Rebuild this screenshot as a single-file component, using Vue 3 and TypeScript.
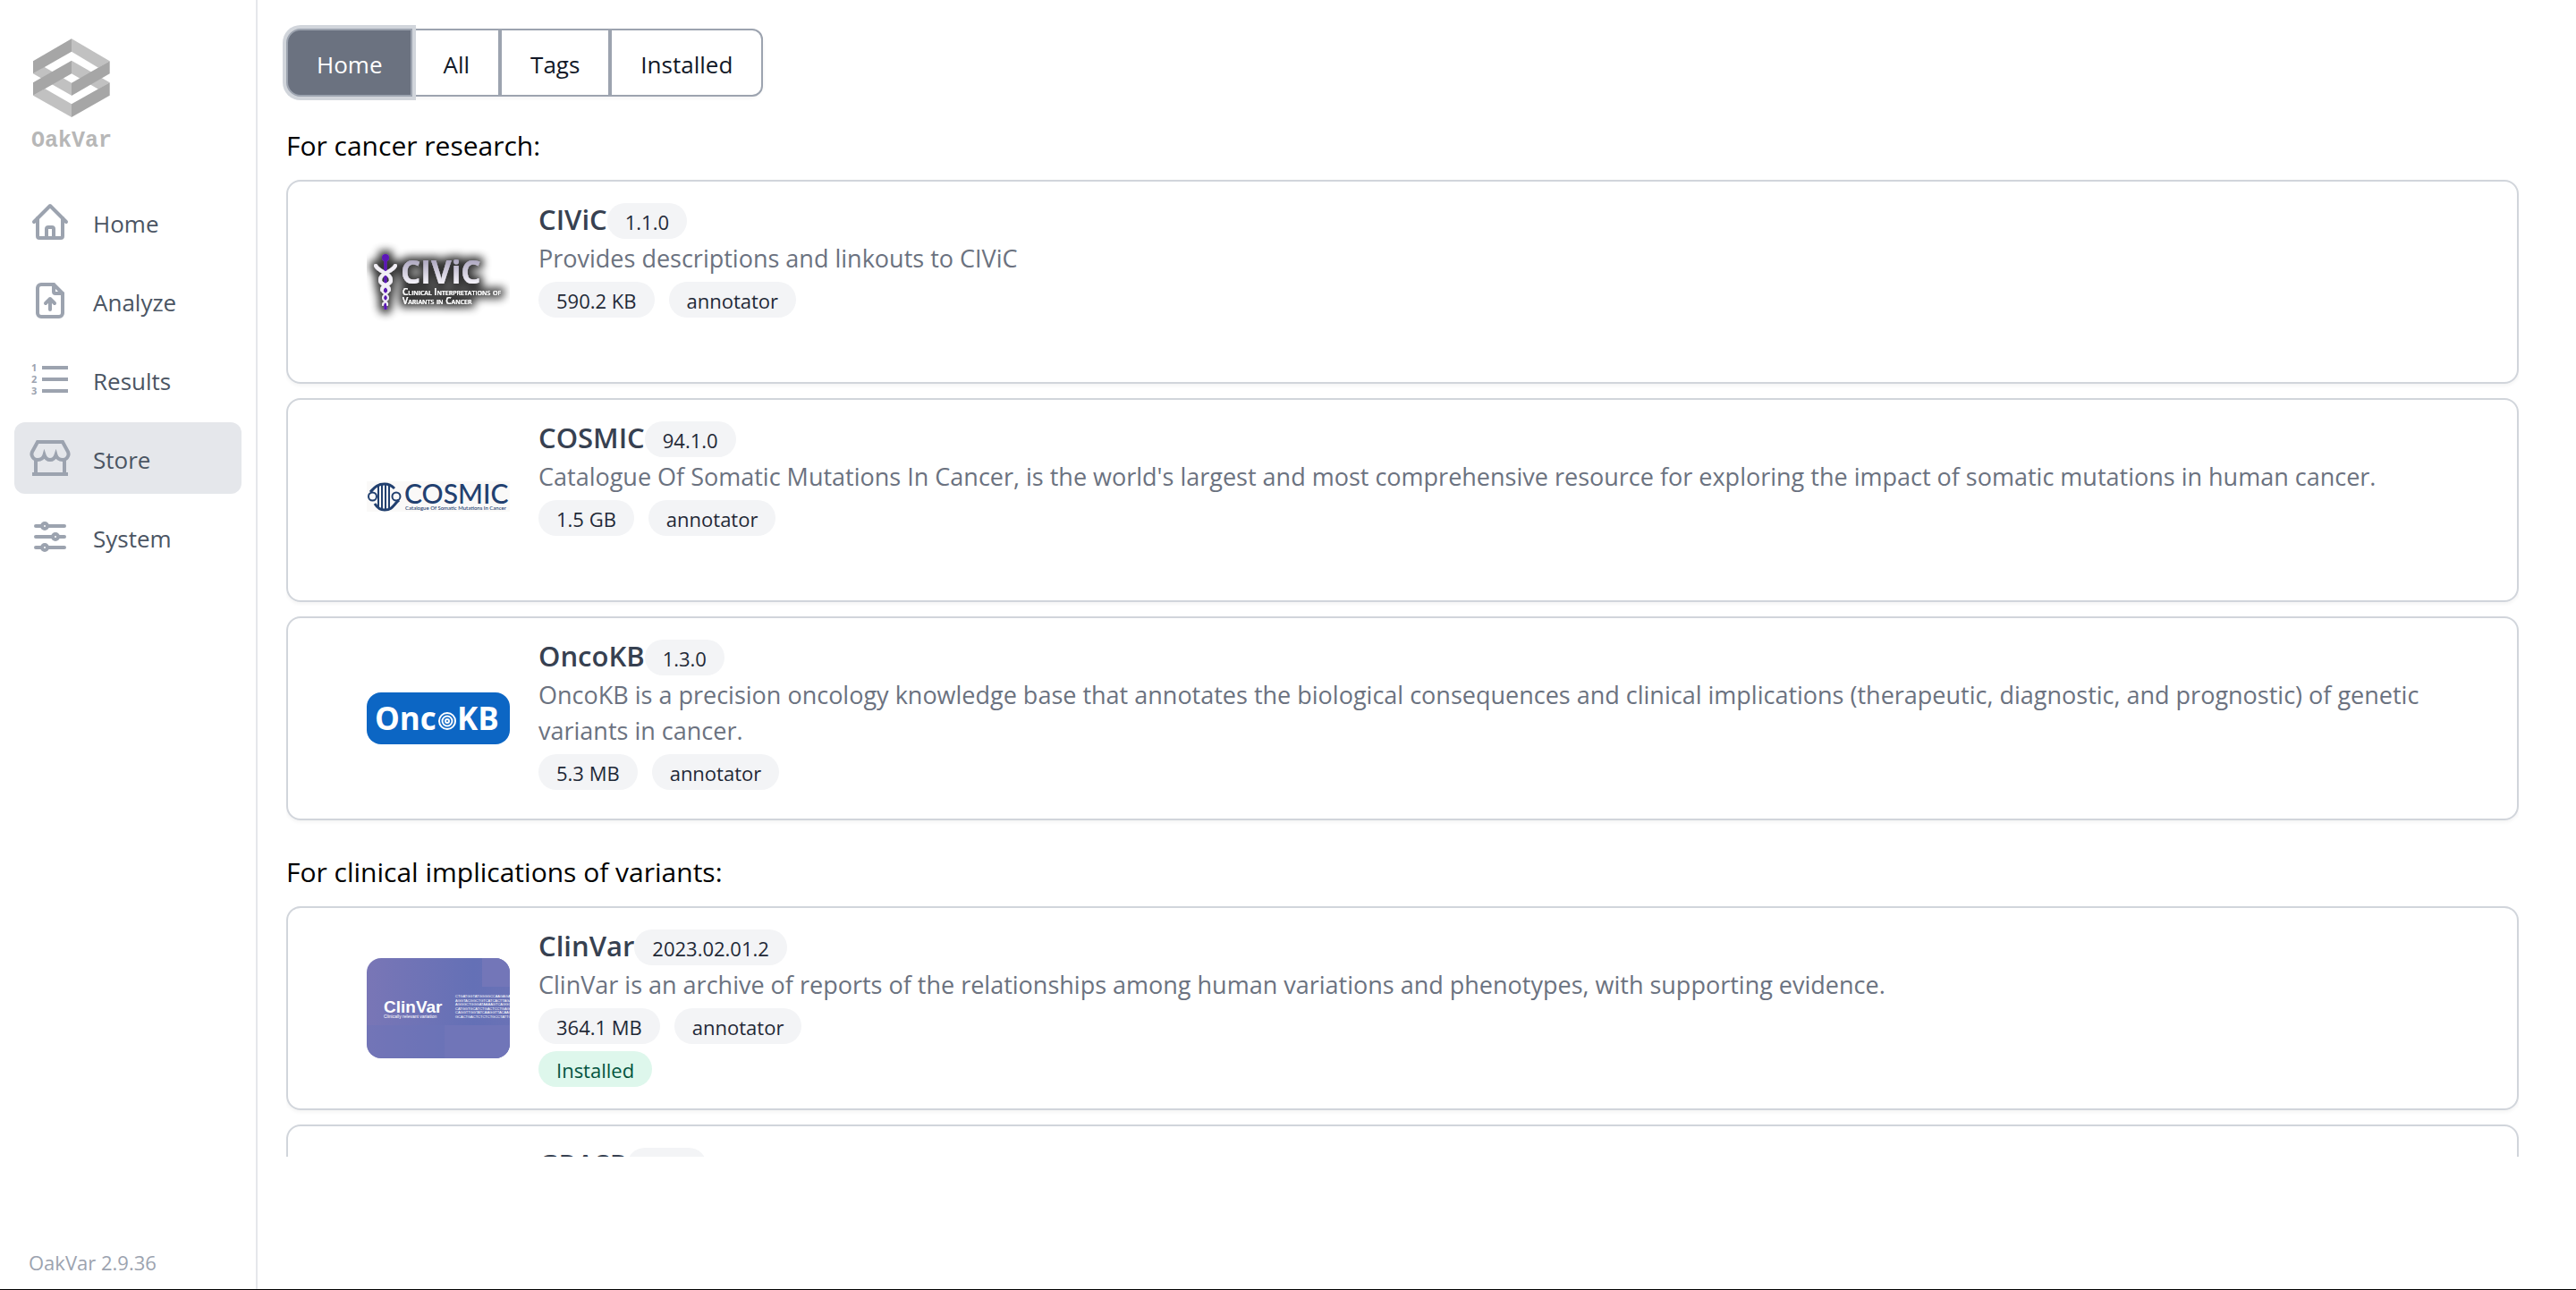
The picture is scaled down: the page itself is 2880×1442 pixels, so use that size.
<script setup lang="ts">
import { ref } from 'vue'

interface StoreModule {
  name: string
  title: string
  version: string
  description: string
  size: string
  type: string
  installed: boolean
}

interface Section {
  heading: string
  modules: StoreModule[]
}

const navItems = ['Home', 'Analyze', 'Results', 'Store', 'System']
const currentPage = 'Store'

const tabs = ['Home', 'All', 'Tags', 'Installed']
const activeTab = ref('Home')

const sections: Section[] = [
  {
    heading: 'For cancer research:',
    modules: [
      {
        name: 'civic',
        title: 'CIViC',
        version: '1.1.0',
        description: 'Provides descriptions and linkouts to CIViC',
        size: '590.2 KB',
        type: 'annotator',
        installed: false,
      },
      {
        name: 'cosmic',
        title: 'COSMIC',
        version: '94.1.0',
        description:
          "Catalogue Of Somatic Mutations In Cancer, is the world's largest and most comprehensive resource for exploring the impact of somatic mutations in human cancer.",
        size: '1.5 GB',
        type: 'annotator',
        installed: false,
      },
      {
        name: 'oncokb',
        title: 'OncoKB',
        version: '1.3.0',
        description:
          'OncoKB is a precision oncology knowledge base that annotates the biological consequences and clinical implications (therapeutic, diagnostic, and prognostic) of genetic variants in cancer.',
        size: '5.3 MB',
        type: 'annotator',
        installed: false,
      },
    ],
  },
  {
    heading: 'For clinical implications of variants:',
    modules: [
      {
        name: 'clinvar',
        title: 'ClinVar',
        version: '2023.02.01.2',
        description:
          'ClinVar is an archive of reports of the relationships among human variations and phenotypes, with supporting evidence.',
        size: '364.1 MB',
        type: 'annotator',
        installed: true,
      },
      {
        name: 'grasp',
        title: 'GRASP',
        version: '1.1.0',
        description: '',
        size: '',
        type: '',
        installed: false,
      },
    ],
  },
]

const sequences = [
  'CTGATGGTATGGGGCCAAGAGATA',
  'AGGTACGGCTGTCATCACTTAGAC',
  'AGGGCTGGGATAAAAGTCAGGGCA',
  'CATGGTGCATCTGACTCCTGAGGA',
  'CAGGTTGGTATCAAGGTTACAAGA',
  'GCACTGACTCTCTCTGCCTATTGG',
]
</script>

<template>
  <div class="page">
    <aside class="sidebar">
      <a class="brand" href="#" aria-label="OakVar home">
        <svg class="brand-mark" viewBox="108 125 264 268" aria-hidden="true">
          <g fill="#c1c1c1">
            <path d="M240 128 368 203 330 225 240 171Z" />
            <path d="M111 245 148 222 240 276V318Z" />
            <path d="M240 201 368 275 330 297 240 245Z" />
            <path d="M111 318 150 295 240 347V391Z" />
          </g>
          <g fill="#a6a6a6">
            <path d="M111 203 240 128V171L111 245Z" />
            <path d="M111 275 240 201V245L111 318Z" />
            <path d="M368 203V245L240 319V276Z" />
            <path d="M368 275V318L240 391V347Z" />
          </g>
        </svg>
        <span class="brand-name">OakVar</span>
      </a>

      <nav class="nav">
        <a
          v-for="item in navItems"
          :key="item"
          href="#"
          class="nav-item"
          :class="{ current: item === currentPage }"
        >
          <svg class="nav-icon" viewBox="0 0 48 48" aria-hidden="true">
            <g v-if="item === 'Home'" stroke-linecap="round" stroke-linejoin="round">
              <path d="M6 24 24 6 42 24" />
              <path d="M10 20V40a2 2 0 0 0 2 2H36a2 2 0 0 0 2-2V20" />
              <path d="M20 42V32a2 2 0 0 1 2-2H26a2 2 0 0 1 2 2V42" />
            </g>
            <g v-else-if="item === 'Analyze'" stroke-linecap="round" stroke-linejoin="round">
              <path d="M28 6H14a4 4 0 0 0-4 4V38a4 4 0 0 0 4 4H34a4 4 0 0 0 4-4V16Z" />
              <path d="M28 6V14a2 2 0 0 0 2 2H38" />
              <path d="M24 34V22M19 27 24 22 29 27" />
            </g>
            <g v-else-if="item === 'Results'">
              <path d="M15 11H44M15 24H44M15 37H44" />
              <g class="digits">
                <text x="3" y="15">1</text>
                <text x="3" y="28">2</text>
                <text x="3" y="41">3</text>
              </g>
            </g>
            <g v-else-if="item === 'Store'">
              <path
                d="M10 6H38L44 17C46 22 42 26 38 26 34 26 31.500 24 30.500 20.500 29 25 26.500 26 24 26 21.500 26 19 25 17.500 20.500 16.500 24 14 26 10 26 6 26 2 22 4 17Z"
              />
              <path d="M8 25V42M40 25V42M4 42H44" />
            </g>
            <g v-else stroke-linecap="round">
              <path d="M8 12H14M22 12H40M8 24H26M34 24H40M8 36H14M22 36H40" />
              <circle cx="18" cy="12" r="3" />
              <circle cx="30" cy="24" r="3" />
              <circle cx="18" cy="36" r="3" />
            </g>
          </svg>
          <span class="nav-label">{{ item }}</span>
        </a>
      </nav>

      <p class="release">OakVar 2.9.36</p>
    </aside>

    <main class="main">
      <div class="tabs" role="group" aria-label="Store views">
        <button
          v-for="tab in tabs"
          :key="tab"
          type="button"
          class="tab"
          :class="{ active: tab === activeTab }"
          @click="activeTab = tab"
        >
          {{ tab }}
        </button>
      </div>

      <div class="listing">
        <section v-for="section in sections" :key="section.heading" class="section">
          <h2 class="section-title">{{ section.heading }}</h2>
          <div class="cards">
            <article v-for="mod in section.modules" :key="mod.name" class="card">
              <div class="logo">
                <svg v-if="mod.name === 'civic'" class="civic" width="160" height="96" viewBox="0 0 160 96" aria-hidden="true">
                  <defs>
                    <linearGradient id="civic-fill" x1="0" y1="0" x2="0" y2="1">
                      <stop offset="0.2" stop-color="#a9a3bd" />
                      <stop offset="0.8" stop-color="#f6f4fa" />
                    </linearGradient>
                    <filter id="civic-glow" filterUnits="userSpaceOnUse" x="0" y="0" width="160" height="96">
                      <feMorphology in="SourceAlpha" operator="dilate" radius="4" result="wide" />
                      <feGaussianBlur in="wide" stdDeviation="5" result="soft" />
                      <feComponentTransfer in="soft" result="shade">
                        <feFuncA type="linear" slope="0.8" />
                      </feComponentTransfer>
                      <feMerge>
                        <feMergeNode in="shade" />
                        <feMergeNode in="SourceGraphic" />
                      </feMerge>
                    </filter>
                  </defs>
                  <g filter="url(#civic-glow)">
                    <path d="M21 21V79" stroke="#5b17b8" stroke-width="3" />
                    <circle cx="21" cy="21" r="4" fill="#5b17b8" />
                    <g fill="none" stroke="#f2eff6" stroke-linecap="round">
                      <path d="M10 30C14 38 28 38 27 47 26 52 17 51 17 57" stroke-width="4" />
                      <path d="M32 30C28 38 14 38 15 47 16 52 25 51 25 57" stroke-width="4" />
                      <path d="M17 57C17 62 24 61 24 66 24 70 18 70 18 74M25 57C25 62 18 61 18 66 18 70 24 70 23 74" stroke-width="2" />
                    </g>
                    <text class="civic-name" x="38" y="50">CIViC</text>
                    <g class="civic-sub">
                      <text x="40" y="63">Clinical Interpretations of</text>
                      <text x="40" y="73">Variants in Cancer</text>
                    </g>
                  </g>
                </svg>

                <svg v-else-if="mod.name === 'cosmic'" width="160" height="42" viewBox="0 0 160 42" aria-hidden="true">
                  <rect width="160" height="34" fill="#faf9f8" />
                  <g fill="none" stroke="#22406f" stroke-width="2">
                    <circle cx="6.500" cy="17" r="4.500" />
                    <circle cx="33" cy="17" r="4.500" />
                    <path d="M4 12C8 8 11 3 20 3 25 3 28 5 31 8M9 25C12 30 15 32 20 32 29 32 30 26 36 21" stroke-width="3" />
                    <path d="M13 5V30M17 4V31M21 4V31M25 5V30" />
                  </g>
                  <text class="cosmic-name" x="42" y="25">COSMIC</text>
                  <text class="cosmic-sub" x="43" y="32">Catalogue Of Somatic Mutations In Cancer</text>
                </svg>

                <svg v-else-if="mod.name === 'oncokb'" width="160" height="58" viewBox="0 0 160 58" aria-hidden="true">
                  <rect width="160" height="58" rx="16" fill="#0c66c4" />
                  <g class="oncokb-name">
                    <text x="9" y="42">Onc</text>
                    <text x="101" y="42">KB</text>
                  </g>
                  <g fill="none" stroke="#fff" stroke-width="2">
                    <circle cx="90" cy="32" r="9" />
                    <circle cx="90" cy="32" r="5.500" />
                    <circle cx="90" cy="32" r="2" />
                  </g>
                </svg>

                <svg v-else-if="mod.name === 'clinvar'" class="clinvar" width="160" height="112" viewBox="0 0 160 112" aria-hidden="true">
                  <defs>
                    <linearGradient id="clinvar-bg" x1="0" y1="0" x2="1" y2="0">
                      <stop offset="0" stop-color="#7976b6" />
                      <stop offset="0.75" stop-color="#6470b6" />
                      <stop offset="1" stop-color="#6a72b6" />
                    </linearGradient>
                  </defs>
                  <rect width="160" height="112" fill="url(#clinvar-bg)" />
                  <path d="M129 0H160V32H129Z" fill="#7376b8" />
                  <path d="M0 75H87V112H0Z" fill="#6b73b8" opacity="0.5" />
                  <path d="M87 75H160V112H87Z" fill="#7075b8" />
                  <g fill="#fff">
                    <text class="clinvar-name" x="19" y="61">ClinVar</text>
                    <text class="clinvar-sub" x="19" y="67">Clinically relevant variation</text>
                    <text
                      v-for="(row, i) in sequences"
                      :key="row"
                      class="clinvar-seq"
                      x="99"
                      :y="44 + i * 4.6"
                    >{{ row }}</text>
                  </g>
                </svg>
              </div>

              <div class="info">
                <div class="title-row">
                  <h3 class="title">{{ mod.title }}</h3>
                  <span class="badge">{{ mod.version }}</span>
                </div>
                <p class="description">{{ mod.description }}</p>
                <div v-if="mod.size" class="badges">
                  <span class="badge">{{ mod.size }}</span>
                  <span class="badge">{{ mod.type }}</span>
                </div>
                <div v-if="mod.installed" class="status">
                  <span class="badge green">Installed</span>
                </div>
              </div>
            </article>
          </div>
        </section>
      </div>
    </main>
  </div>
</template>

<style>
body {
  margin: 0;
  background: #fff;
}
</style>

<style scoped>
.page {
  display: flex;
  box-sizing: border-box;
  height: 100vh;
  border-bottom: 1px solid #000;
  font-family: 'Open Sans', 'Noto Sans', sans-serif;
  font-size: 27px;
  line-height: 40px;
  color: #000;
}

.sidebar {
  display: flex;
  flex: none;
  flex-direction: column;
  box-sizing: border-box;
  width: 288px;
  padding: 42px 16px 10px;
  border-right: 2px solid #e5e7eb;
}

.brand {
  display: flex;
  flex-direction: column;
  align-self: flex-start;
  align-items: center;
  margin-left: 19px;
  margin-bottom: 34px;
  text-decoration: none;
}

.brand-mark {
  width: 88px;
  height: 90px;
}

.brand-name {
  margin-top: 10px;
  font-family: 'Liberation Mono', monospace;
  font-size: 25px;
  font-weight: 700;
  line-height: 32px;
  color: #b7b7b7;
}

.nav {
  display: flex;
  flex: 1;
  flex-direction: column;
  gap: 8px;
}

.nav-item {
  display: flex;
  align-items: center;
  gap: 24px;
  height: 80px;
  padding: 0 16px;
  border-radius: 12px;
  font-size: 26px;
  color: #4b5563;
  text-decoration: none;
}

.nav-item.current {
  background: #e5e7eb;
}

.nav-icon {
  width: 48px;
  height: 48px;
  fill: none;
  stroke: #9ca3af;
  stroke-width: 4;
}

.nav-label {
  padding-top: 4px;
}

.digits {
  fill: #9ca3af;
  stroke: none;
  font-size: 11px;
  font-weight: 700;
}

.release {
  margin: 0 16px;
  font-size: 22px;
  color: #9ca3af;
}

.main {
  display: flex;
  flex: 1;
  flex-direction: column;
  min-width: 0;
  padding: 32px 64px 148px 32px;
}

.tabs {
  display: flex;
  flex: none;
  align-self: flex-start;
  border-radius: 16px;
  box-shadow: 0 2px 4px rgba(0, 0, 0, 0.05);
}

.tab {
  height: 76px;
  padding: 4px 32px 0;
  border: 2px solid #9ca3af;
  background: #fff;
  font: inherit;
  font-size: 26px;
  color: #111827;
  cursor: pointer;
}

.tab:first-child {
  border-radius: 16px 0 0 16px;
}

.tab:last-child {
  border-radius: 0 12px 12px 0;
}

.tab.active {
  z-index: 1;
  background: #6b7280;
  box-shadow: 0 0 0 4px #d1d5db;
  color: #fff;
}

.listing {
  display: flex;
  flex: 1;
  flex-direction: column;
  gap: 36px;
  min-height: 0;
  margin-top: 33px;
  overflow-y: auto;
  scrollbar-width: none;
}

.section-title {
  margin: 0 0 16px;
  font-size: 30px;
  font-weight: 400;
  line-height: 44px;
}

.cards {
  display: flex;
  flex-direction: column;
  gap: 16px;
}

.card {
  display: flex;
  gap: 32px;
  box-sizing: border-box;
  min-height: 228px;
  padding: 0 48px 0 88px;
  border: 2px solid #d1d5db;
  border-radius: 16px;
  box-shadow: 0 2px 4px rgba(0, 0, 0, 0.05);
}

.logo {
  display: flex;
  flex: none;
  align-items: center;
  width: 160px;
}

.info {
  flex: 1;
  min-width: 0;
  padding: 24px 0;
}

.title-row,
.badges,
.status {
  display: flex;
}

.title {
  margin: 0;
  font-size: 31px;
  font-weight: 600;
  line-height: 36px;
  color: #374151;
}

.description {
  margin: 2px 0 6px;
  color: #6b7280;
}

.badges {
  gap: 16px;
}

.status {
  margin-top: 8px;
}

.badge {
  padding: 2px 20px 0;
  border-radius: 20px;
  background: #f3f4f6;
  font-size: 22px;
  line-height: 38px;
  color: #1f2937;
}

.badge.green {
  background: #def7ec;
  color: #03543f;
}

.civic-name {
  fill: url(#civic-fill);
  font-size: 35px;
  font-weight: 700;
}

.civic-sub {
  fill: #fff;
  font-size: 10px;
  font-variant: small-caps;
  font-weight: 600;
}

.cosmic-name {
  fill: #22406f;
  font-family: Lato, sans-serif;
  font-size: 30px;
  font-weight: 500;
}

.cosmic-sub {
  fill: #22406f;
  font-family: Lato, sans-serif;
  font-size: 6px;
  font-weight: 500;
}

.oncokb-name {
  fill: #fff;
  font-size: 35px;
  font-weight: 700;
}

.clinvar {
  border-radius: 16px;
}

.clinvar-name,
.clinvar-sub,
.clinvar-seq {
  font-family: 'Liberation Sans', sans-serif;
}

.clinvar-name {
  font-size: 19px;
  font-weight: 700;
}

.clinvar-sub {
  font-size: 5px;
}

.clinvar-seq {
  font-size: 4px;
}
</style>
